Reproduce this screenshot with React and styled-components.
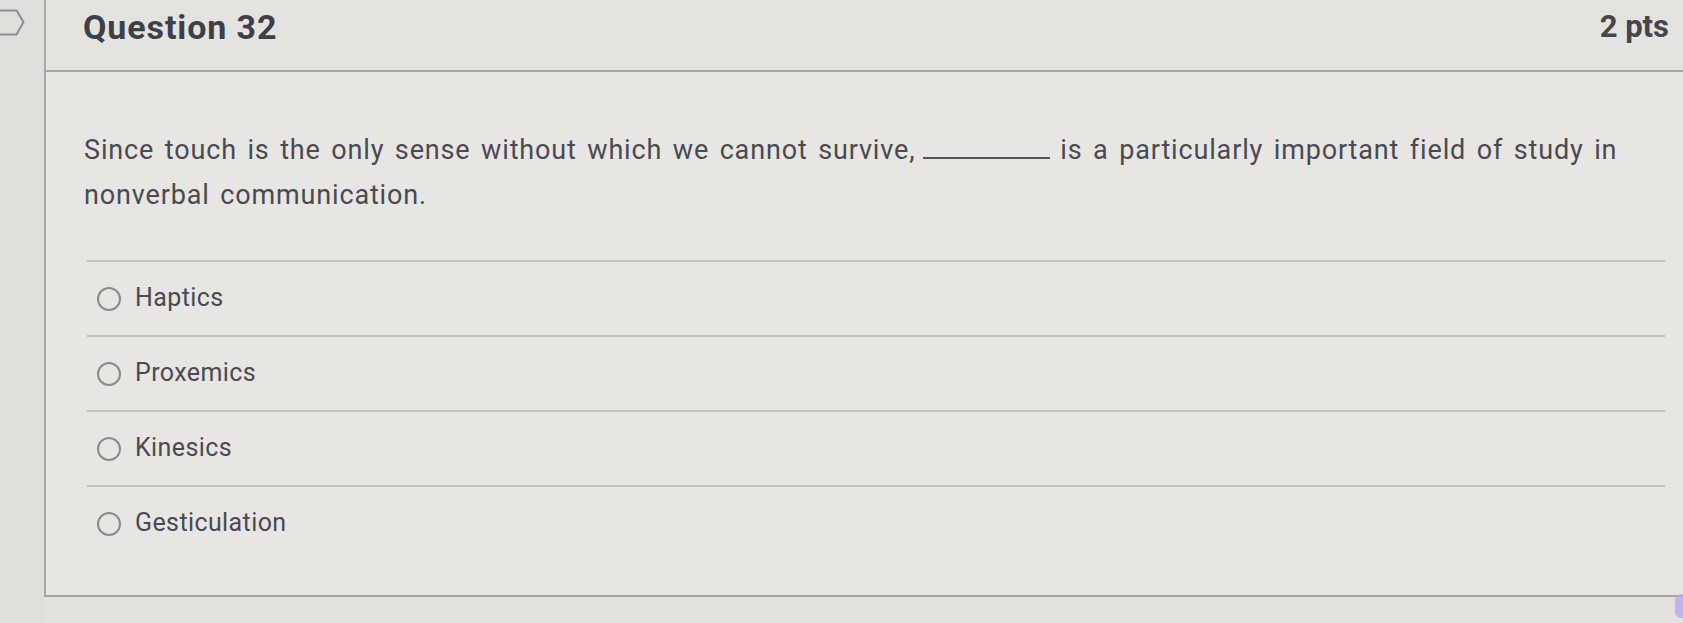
import React from "react";
import styled, { createGlobalStyle } from "styled-components";

const Global = createGlobalStyle`
  html, body { margin: 0; padding: 0; background: #dedcd8; }
  body { font-family: Roboto, "Liberation Sans", Arial, sans-serif; }
`;

const Page = styled.div`
  display: flex;
  width: 1683px;
  height: 623px;
  overflow: hidden;
  background: #e2e1dd;
  position: relative;
`;

const Gutter = styled.div`
  width: 44px;
  flex: none;
  padding-top: 9px;
  background: #e0dfdb;
`;

const Panel = styled.section`
  flex: 1;
  height: 595px;
  display: flex;
  flex-direction: column;
  border-left: 2px solid #a9a7a6;
  border-bottom: 2px solid #a6a5a3;
  background: #e7e6e2;
`;

const Header = styled.header`
  height: 72px;
  flex: none;
  display: flex;
  justify-content: space-between;
  align-items: flex-start;
  padding: 7px 14px 0 37px;
  border-bottom: 2px solid #a8a7a5;
  box-sizing: border-box;
  background: #e4e3df;
`;

const Title = styled.h2`
  margin: 0;
  font-size: 34px;
  font-weight: 700;
  color: #403f48;
  letter-spacing: 0.9px;
`;

const Points = styled.span`
  font-size: 31px;
  font-weight: 700;
  color: #46454d;
  margin-top: 1px;
`;

const Body = styled.div`
  padding: 0 18px 0 38px;
`;

const Question = styled.p`
  margin: 56px 0 0;
  font-size: 27px;
  line-height: 45px;
  letter-spacing: 0.85px;
  word-spacing: 3px;
  color: #4b4952;
`;

const Blank = styled.span`
  display: inline-block;
  width: 127px;
  height: 22px;
  border-bottom: 2px solid #55535a;
  margin: 0 10px 0 8px;
  vertical-align: baseline;
`;

const Options = styled.ul`
  list-style: none;
  margin: 42px 0 0 3px;
  padding: 0;
  border-top: 2px solid #c4c3c0;
`;

const Option = styled.li`
  height: 73px;
  display: flex;
  align-items: center;
  padding-left: 10px;
  gap: 14px;
  border-bottom: ${(p) => (p.$last ? "none" : "2px solid #c4c3c0")};
  font-size: 25px;
  letter-spacing: 0.4px;
  color: #4b4952;
`;

const Radio = styled.span`
  width: 20px;
  height: 20px;
  border-radius: 50%;
  border: 2px solid #8b8a8e;
  flex: none;
`;

const Label = styled.span`
  margin-top: -2px;
`;

const Glow = styled.div`
  position: absolute;
  right: 0;
  top: 594px;
  width: 8px;
  height: 24px;
  border-radius: 6px 0 0 6px;
  background: #b9a8f0;
  opacity: 0.8;
`;

const options = ["Haptics", "Proxemics", "Kinesics", "Gesticulation"];

export default function App() {
  return (
    <>
      <Global />
      <Page>
        <Gutter>
          <svg width="26" height="28" viewBox="0 0 26 28" fill="none">
            <path d="M-2 1.5 H16.5 L23.5 13 L16.5 25.5 H-2" stroke="#8e8d90" strokeWidth="2" strokeLinejoin="round" />
          </svg>
        </Gutter>
        <Panel>
          <Header>
            <Title>Question 32</Title>
            <Points>2 pts</Points>
          </Header>
          <Body>
            <Question>
              Since touch is the only sense without which we cannot survive,<Blank />is a particularly important field of study in nonverbal communication.
            </Question>
            <Options>
              {options.map((o, i) => (
                <Option key={o} $last={i === options.length - 1}>
                  <Radio />
                  <Label>{o}</Label>
                </Option>
              ))}
            </Options>
          </Body>
        </Panel>
        <Glow />
      </Page>
    </>
  );
}
